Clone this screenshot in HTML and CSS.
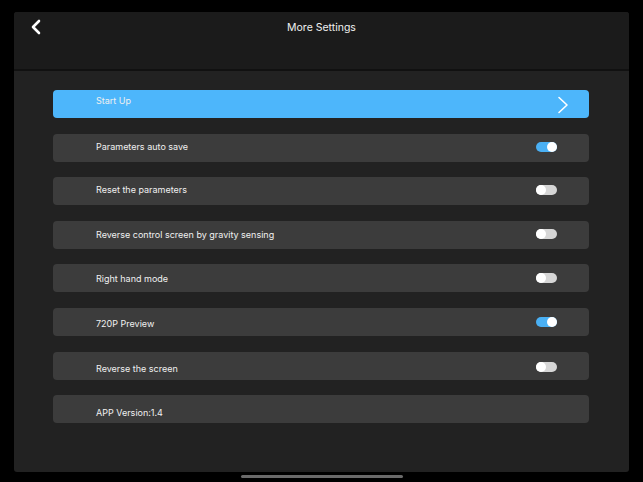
FILE: index.html
```html
<!DOCTYPE html>
<html>
<head>
<meta charset="utf-8">
<link rel="stylesheet" href="styles.css">
</head>
<body>
<div class="screen">
  <div class="panel">
    <header class="header">
      <svg class="back" width="12" height="16" viewBox="0 0 12 16"><path d="M9 2 L3 8 L9 14" fill="none" stroke="#fff" stroke-width="2.6" stroke-linecap="round" stroke-linejoin="round"/></svg>
      <div class="title">More Settings</div>
    </header>
    <main class="content">
      <div class="row row-primary">
        <span class="label">Start Up</span>
        <svg class="chev" width="12" height="18" viewBox="0 0 12 18"><path d="M2 1.5 L10 9 L2 16.5" fill="none" stroke="#fff" stroke-width="1.6" stroke-linecap="round" stroke-linejoin="round"/></svg>
      </div>
      <div class="row"><span class="label">Parameters auto save</span><span class="toggle on"><span class="knob"></span></span></div>
      <div class="row"><span class="label">Reset the parameters</span><span class="toggle"><span class="knob"></span></span></div>
      <div class="row"><span class="label">Reverse control screen by gravity sensing</span><span class="toggle"><span class="knob"></span></span></div>
      <div class="row"><span class="label">Right hand mode</span><span class="toggle"><span class="knob"></span></span></div>
      <div class="row"><span class="label">720P Preview</span><span class="toggle on"><span class="knob"></span></span></div>
      <div class="row"><span class="label">Reverse the screen</span><span class="toggle"><span class="knob"></span></span></div>
      <div class="row"><span class="label">APP Version:1.4</span></div>
    </main>
  </div>
  <div class="home-bar"></div>
</div>
</body>
</html>
```
FILE: styles.css
```css
* { box-sizing: border-box; }
html, body { margin: 0; padding: 0; background: #000; }
body { width: 643px; height: 482px; overflow: hidden; font-family: Inter, Roboto, "Liberation Sans", sans-serif; color: #f2f2f2; }
.screen { width: 643px; height: 482px; padding: 12px 14px 0 14px; display: flex; flex-direction: column; align-items: center; }
.panel { width: 615px; height: 460px; border-radius: 3px; overflow: hidden; display: flex; flex-direction: column; background: #222; }
.header { height: 59px; background: #1b1b1b; border-bottom: 2px solid #111; position: relative; display: flex; justify-content: center; padding-top: 8px; flex: none; }
.back { position: absolute; left: 16px; top: 7px; }
.title { font-size: 10.5px; line-height: 15px; color: #f0f0f0; }
.content { flex: 1; padding: 19px 40px 0 39px; display: flex; flex-direction: column; gap: 15.6px; }
.row { height: 28px; border-radius: 4px; background: #3c3c3c; display: flex; align-items: flex-start; padding-left: 43px; padding-right: 32px; position: relative; }
.row-primary { background: #4db6fb; }
.label { font-size: 9px; line-height: 12px; color: #f0f0f0; flex: 1; }
.row:nth-child(1) .label { margin-top: 5px; }
.row:nth-child(2) .label { margin-top: 7px; }
.row:nth-child(3) .label { margin-top: 7px; }
.row:nth-child(4) .label { margin-top: 8px; }
.row:nth-child(5) .label { margin-top: 9px; }
.row:nth-child(6) .label { margin-top: 10px; }
.row:nth-child(7) .label { margin-top: 11px; }
.row:nth-child(8) .label { margin-top: 12px; }
.chev { position: absolute; right: 20px; top: 6px; }
.toggle { width: 21px; height: 10px; border-radius: 5px; background: #d6d6d6; position: relative; margin-top: 8px; flex: none; }
.toggle.on { background: #4ab0f4; }
.knob { position: absolute; top: 0px; left: 0px; width: 10px; height: 10px; border-radius: 50%; background: #fff; }
.toggle.on .knob { left: 11px; }
.row:nth-child(5) .toggle, .row:nth-child(6) .toggle { margin-top: 9px; }
.row:nth-child(7) .toggle { margin-top: 10px; }
.home-bar { width: 162px; height: 3px; border-radius: 2px; background: #6a6a6a; margin-top: 3px; }
```
